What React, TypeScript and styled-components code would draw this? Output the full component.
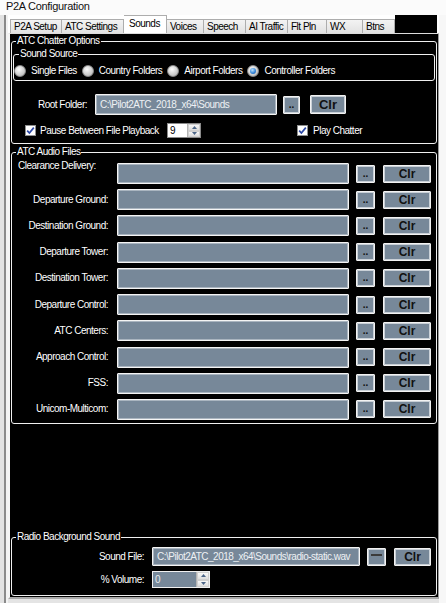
import React from 'react';
import styled, { createGlobalStyle, css } from 'styled-components';

const SLATE = '#778899';

const GlobalStyle = createGlobalStyle`
  html, body {
    margin: 0;
    padding: 0;
  }

  body {
    background: #ffffff;
    font-family: "Liberation Sans", Arial, sans-serif;
    font-size: 10px;
  }

  * {
    box-sizing: border-box;
  }
`;

const Window = styled.div`
  width: 446px;
  height: 603px;
  background: #fbfbfb;
  display: flex;
  flex-direction: column;
  overflow: hidden;
`;

const TitleBar = styled.div`
  height: 15px;
  padding: 0 0 0 6px;
  font-size: 11px;
  line-height: 13px;
  letter-spacing: -0.3px;
  color: #111;
`;

const Frame = styled.div`
  flex: 1;
  display: flex;
`;

const LeftEdge = styled.div`
  width: 8px;
  background: linear-gradient(to right, #e2e2e2 0 4px, #8a8a8a 4px 6px, #f2f2f2 6px 8px);
`;

const RightEdge = styled.div`
  flex: 1;
  background: #f7f7f7;
`;

const TabControl = styled.div`
  width: 431px;
  display: flex;
  flex-direction: column;
  background: #e4e4e4;
`;

const TabStrip = styled.div`
  height: 18px;
  display: flex;
  align-items: flex-end;
  padding-left: 2px;
  background: #fff;
`;

const Tab = styled.div<{ $w: number; $active?: boolean }>`
  width: ${(p) => p.$w}px;
  height: ${(p) => (p.$active ? 18 : 14)}px;
  flex: none;
  border: 1px solid #adadad;
  border-left-width: 0;
  border-bottom: none;
  background: ${(p) => (p.$active ? '#fff' : 'linear-gradient(#f3f3f3, #e2e2e2)')};
  color: #000;
  display: flex;
  align-items: center;
  padding-left: ${(p) => (p.$active ? 5 : 3)}px;
  padding-bottom: ${(p) => (p.$active ? 2 : 0)}px;
  font-size: 10px;
  letter-spacing: -0.5px;
  white-space: nowrap;

  &:first-child {
    border-left-width: 1px;
  }
`;

const StripFill = styled.div`
  flex: 1;
  align-self: stretch;
  margin-right: 2px;
  background: #000;
`;

const TabPage = styled.div`
  height: 566px;
  background: #000;
  border-style: solid;
  border-width: 1px 1px 2px 2px;
  border-color: #dcdcdc #9c9c9c #a8a8a8 #f4f4f4;
  padding: 0 1px;
  display: flex;
  flex-direction: column;
`;

const Group = styled.fieldset<{ $mt?: number; $mx?: number; $mb?: number; $pb?: number }>`
  margin: ${(p) => p.$mt ?? 0}px ${(p) => p.$mx ?? 0}px ${(p) => p.$mb ?? 0}px;
  padding: 0 0 ${(p) => p.$pb ?? 0}px;
  min-inline-size: 0;
  border: 1px solid #f0f0f0;
  border-radius: 3px;
  color: #fff;
`;

const Legend = styled.legend<{ $ml?: number }>`
  margin-left: ${(p) => p.$ml ?? 4}px;
  padding: 0 1px;
  font-size: 10px;
  line-height: 12px;
  letter-spacing: -0.5px;
  color: #fff;
`;

const Spacer = styled.div`
  flex: 1;
`;

const RadioRow = styled.div`
  display: flex;
  align-items: center;
  height: 19px;
  margin-top: 1px;
  gap: 5px;
`;

const RadioItem = styled.div`
  display: flex;
  align-items: center;
  gap: 5px;
  font-size: 10px;
  letter-spacing: -0.5px;
  color: #fff;
  white-space: nowrap;
`;

const RadioDot = styled.span<{ $on?: boolean }>`
  width: 12px;
  height: 12px;
  flex: none;
  border-radius: 50%;
  border: 1px solid #8a8a8a;
  background: radial-gradient(circle at 40% 35%, #fafafa, #c4c4c4 70%, #a9a9a9);
  display: flex;
  align-items: center;
  justify-content: center;

  ${(p) =>
    p.$on &&
    css`
      &::after {
        content: '';
        width: 6px;
        height: 6px;
        border-radius: 50%;
        background: radial-gradient(circle at 40% 35%, #bfe4ff, #2c7fd6 60%, #1a4f9a);
      }
    `}
`;

const Row = styled.div<{ $h: number; $mt?: number; $pl?: number }>`
  display: flex;
  align-items: center;
  height: ${(p) => p.$h}px;
  margin-top: ${(p) => p.$mt ?? 0}px;
  padding-left: ${(p) => p.$pl ?? 0}px;
`;

const FieldLabel = styled.span<{ $w: number; $top?: boolean }>`
  width: ${(p) => p.$w}px;
  flex: none;
  text-align: right;
  padding-right: 1px;
  font-size: 10px;
  line-height: 12px;
  letter-spacing: -0.5px;
  color: #fff;
  white-space: nowrap;

  ${(p) =>
    p.$top &&
    css`
      text-align: left;
      padding-left: 6px;
      align-self: flex-start;
      margin-top: -3px;
    `}
`;

const TextField = styled.div<{ $w: number; $h: number; $ml?: number }>`
  width: ${(p) => p.$w}px;
  height: ${(p) => p.$h}px;
  margin-left: ${(p) => p.$ml ?? 0}px;
  flex: none;
  background: ${SLATE};
  border: 1px solid #f4f4f4;
  box-shadow: inset 0 0 0 1px #aab5c0;
  border-radius: 1px;
  color: #eef1f4;
  padding-left: 4px;
  display: flex;
  align-items: center;
  font-size: 10px;
  letter-spacing: -0.5px;
  white-space: nowrap;
  overflow: hidden;
`;

const SlateButton = styled.div<{ $w: number; $h: number; $ml?: number; $fs?: number; $dots?: boolean }>`
  width: ${(p) => p.$w}px;
  height: ${(p) => p.$h}px;
  margin-left: ${(p) => p.$ml ?? 0}px;
  flex: none;
  background: ${SLATE};
  border: 1px solid #f2f2f2;
  box-shadow: inset 0 0 0 1px #c9d0d7;
  border-radius: 1px;
  color: #111;
  font-weight: bold;
  font-size: ${(p) => p.$fs ?? 12}px;
  line-height: 1;
  display: flex;
  justify-content: center;
  align-items: ${(p) => (p.$dots ? 'flex-end' : 'center')};
  padding-bottom: ${(p) => (p.$dots ? 3 : 0)}px;
`;

const Dash = styled.span`
  width: 11px;
  height: 2px;
  margin-bottom: 3px;
  background: #3b3b3b;
`;

const CheckBox = styled.span<{ $ml?: number }>`
  width: 11px;
  height: 11px;
  flex: none;
  margin-left: ${(p) => p.$ml ?? 0}px;
  background: #fff;
  border: 1px solid #8e8f8f;
  display: flex;
  align-items: center;
  justify-content: center;
`;

const CheckLabel = styled.span<{ $w?: number; $ml?: number }>`
  ${(p) => p.$w && `width: ${p.$w}px;`}
  flex: none;
  margin-left: ${(p) => p.$ml ?? 4}px;
  font-size: 10px;
  letter-spacing: -0.5px;
  color: #fff;
  white-space: nowrap;
`;

const Numeric = styled.div<{ $w: number; $h: number; $ml?: number; $slate?: boolean }>`
  width: ${(p) => p.$w}px;
  height: ${(p) => p.$h}px;
  margin-left: ${(p) => p.$ml ?? 0}px;
  flex: none;
  display: flex;
  border: 1px solid ${(p) => (p.$slate ? '#f0f0f0' : '#8a8a8a')};
  background: ${(p) => (p.$slate ? SLATE : '#fff')};
  color: ${(p) => (p.$slate ? '#e6ebef' : '#000')};
  font-size: 10px;
`;

const NumValue = styled.span`
  flex: 1;
  padding-left: 2px;
  display: flex;
  align-items: center;
`;

const Spinner = styled.div`
  width: 13px;
  display: flex;
  flex-direction: column;
  border-left: 1px solid #b4b4b4;
`;

const SpinBtn = styled.div`
  flex: 1;
  display: flex;
  align-items: center;
  justify-content: center;
  background: linear-gradient(#f7f7f7, #dcdcdc);
  border: 1px solid #cfcfcf;
`;

const AudioList = styled.div`
  display: flex;
  flex-direction: column;
  gap: 5.22px;
  padding-top: 5px;
`;

const Check = () => (
  <svg width="9" height="9" viewBox="0 0 9 9">
    <path d="M1.2 4.6 L3.4 7 L7.8 1.6" fill="none" stroke="#2a47a6" strokeWidth="1.7" />
  </svg>
);

const Arrow = ({ down }: { down?: boolean }) => (
  <svg width="5" height="3" viewBox="0 0 5 3">
    <path d={down ? 'M0 0 H5 L2.5 3 Z' : 'M0 3 H5 L2.5 0 Z'} fill="#4b6587" />
  </svg>
);

const UpDown = () => (
  <Spinner>
    <SpinBtn>
      <Arrow />
    </SpinBtn>
    <SpinBtn>
      <Arrow down />
    </SpinBtn>
  </Spinner>
);

const tabs: [string, number][] = [
  ['P2A Setup', 52],
  ['ATC Settings', 62],
  ['Sounds', 43],
  ['Voices', 37],
  ['Speech', 42],
  ['AI Traffic', 42],
  ['Flt Pln', 39],
  ['WX', 36],
  ['Btns', 32]
];

const sources = ['Single Files', 'Country Folders', 'Airport Folders', 'Controller Folders'];

const audioRows = [
  'Clearance Delivery:',
  'Departure Ground:',
  'Destination Ground:',
  'Departure Tower:',
  'Destination Tower:',
  'Departure Control:',
  'ATC Centers:',
  'Approach Control:',
  'FSS:',
  'Unicom-Multicom:'
];

const App: React.FC = () => {
  return (
    <Window>
      <GlobalStyle />
      <TitleBar>P2A Configuration</TitleBar>

      <Frame>
        <LeftEdge />
        <TabControl>
          <TabStrip>
            {tabs.map(([name, w]) => (
              <Tab key={name} $w={w} $active={name === 'Sounds'}>
                {name}
              </Tab>
            ))}
            <StripFill />
          </TabStrip>

          <TabPage>
            <Group $mt={1} $pb={5}>
              <Legend>ATC Chatter Options</Legend>

              <Group $mt={1} $mx={1}>
                <Legend $ml={5}>Sound Source</Legend>
                <RadioRow>
                  {sources.map((s) => (
                    <RadioItem key={s}>
                      <RadioDot $on={s === 'Controller Folders'} />
                      {s}
                    </RadioItem>
                  ))}
                </RadioRow>
              </Group>

              <Row $h={21} $mt={13}>
                <FieldLabel $w={76}>Root Folder:</FieldLabel>
                <TextField $w={182} $h={21} $ml={7}>
                  C:\Pilot2ATC_2018_x64\Sounds
                </TextField>
                <SlateButton $w={17} $h={18} $ml={6} $fs={10} $dots>
                  ..
                </SlateButton>
                <SlateButton $w={36} $h={19} $ml={10} $fs={13}>
                  Clr
                </SlateButton>
              </Row>

              <Row $h={15} $mt={8} $pl={13}>
                <CheckBox>
                  <Check />
                </CheckBox>
                <CheckLabel $w={127}>Pause Between File Playback</CheckLabel>
                <Numeric $w={34} $h={15}>
                  <NumValue>9</NumValue>
                  <UpDown />
                </Numeric>
                <CheckBox $ml={96}>
                  <Check />
                </CheckBox>
                <CheckLabel $ml={5}>Play Chatter</CheckLabel>
              </Row>
            </Group>

            <Group $mt={2} $pb={3}>
              <Legend>ATC Audio Files</Legend>
              <AudioList>
                {audioRows.map((label, i) => (
                  <Row key={label} $h={21}>
                    <FieldLabel $w={97} $top={i === 0}>
                      {label}
                    </FieldLabel>
                    <TextField $w={232} $h={21} $ml={8} />
                    <SlateButton $w={19} $h={18} $ml={7} $fs={10} $dots>
                      ..
                    </SlateButton>
                    <SlateButton $w={48} $h={18} $ml={8}>
                      Clr
                    </SlateButton>
                  </Row>
                ))}
              </AudioList>
            </Group>

            <Spacer />

            <Group $pb={7} $mb={1}>
              <Legend>Radio Background Sound</Legend>
              <Row $h={19} $mt={4}>
                <FieldLabel $w={133}>Sound File:</FieldLabel>
                <TextField $w={208} $h={19} $ml={7}>
                  C:\Pilot2ATC_2018_x64\Sounds\radio-static.wav
                </TextField>
                <SlateButton $w={19} $h={18} $ml={7}>
                  <Dash />
                </SlateButton>
                <SlateButton $w={37} $h={18} $ml={8}>
                  Clr
                </SlateButton>
              </Row>
              <Row $h={17} $mt={5}>
                <FieldLabel $w={133}>% Volume:</FieldLabel>
                <Numeric $w={58} $h={17} $ml={7} $slate>
                  <NumValue>0</NumValue>
                  <UpDown />
                </Numeric>
              </Row>
            </Group>
          </TabPage>
        </TabControl>
        <RightEdge />
      </Frame>
    </Window>
  );
};

export default App;
